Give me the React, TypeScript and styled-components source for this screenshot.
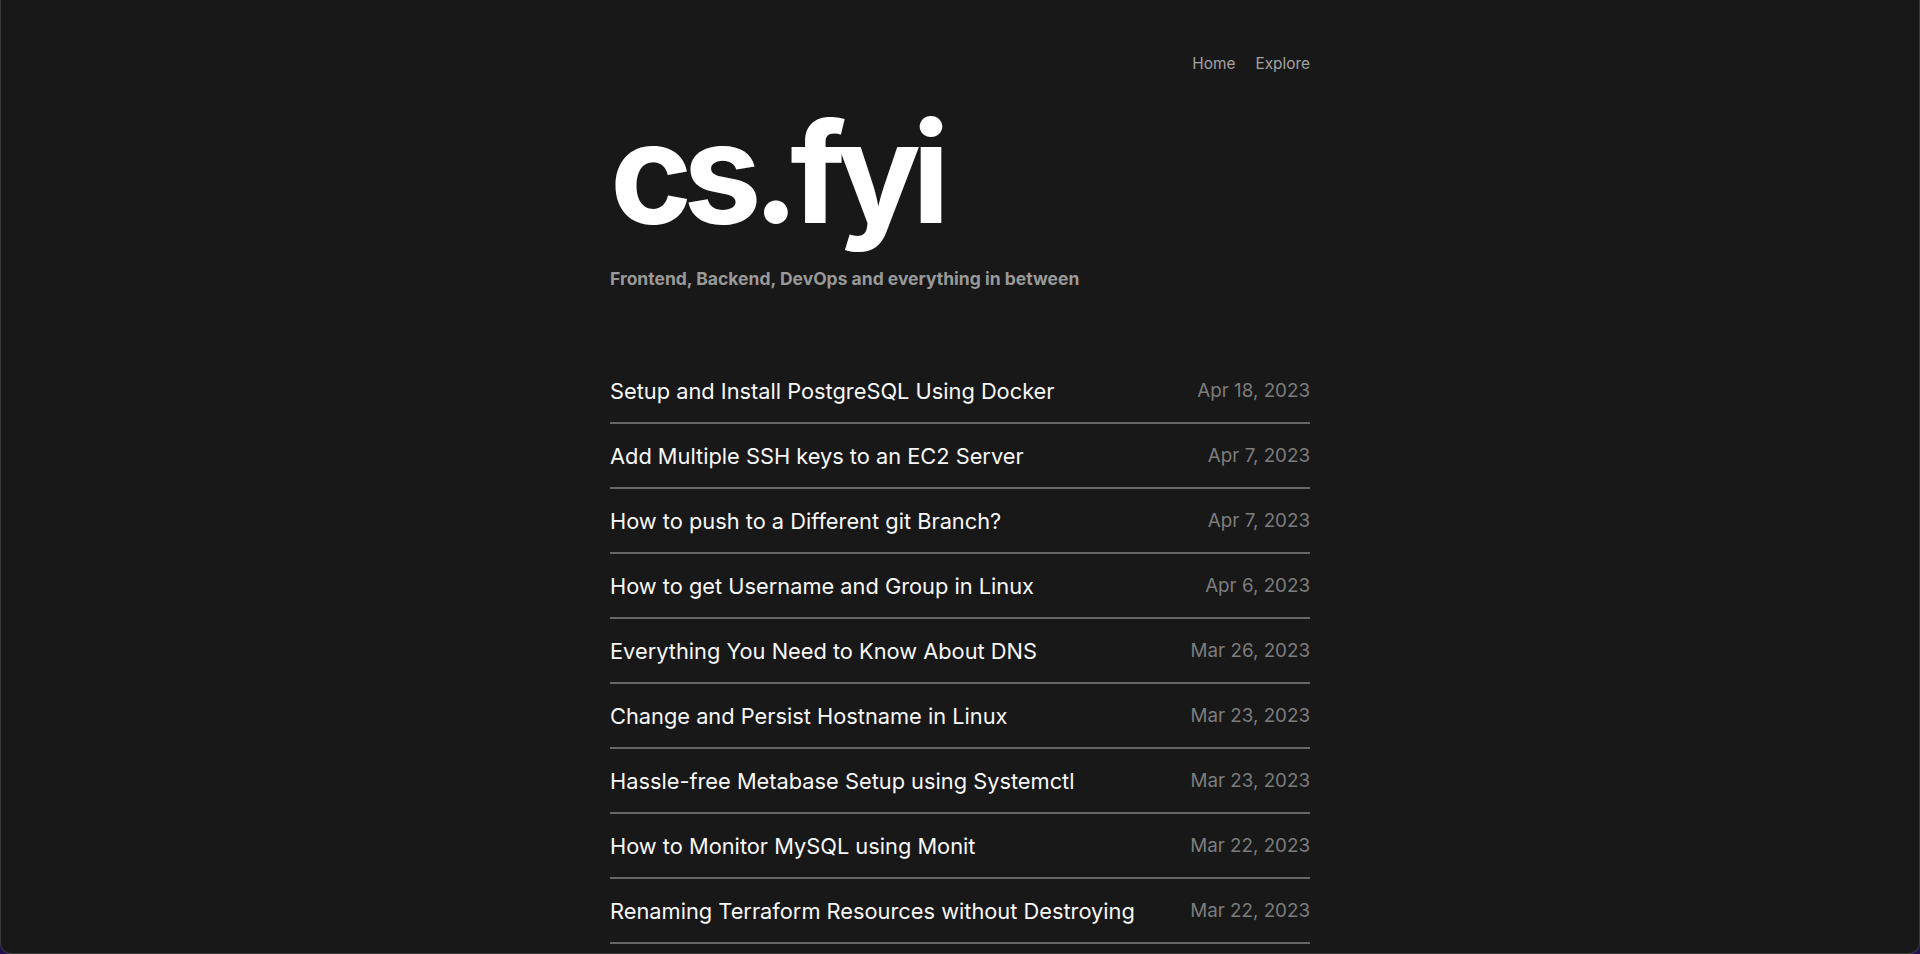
import React from 'react';
import styled, { createGlobalStyle } from 'styled-components';

const posts = [
  { id: 1, title: 'Setup and Install PostgreSQL Using Docker', date: 'Apr 18, 2023' },
  { id: 2, title: 'Add Multiple SSH keys to an EC2 Server', date: 'Apr 7, 2023' },
  { id: 3, title: 'How to push to a Different git Branch?', date: 'Apr 7, 2023' },
  { id: 4, title: 'How to get Username and Group in Linux', date: 'Apr 6, 2023' },
  { id: 5, title: 'Everything You Need to Know About DNS', date: 'Mar 26, 2023' },
  { id: 6, title: 'Change and Persist Hostname in Linux', date: 'Mar 23, 2023' },
  { id: 7, title: 'Hassle-free Metabase Setup using Systemctl', date: 'Mar 23, 2023' },
  { id: 8, title: 'How to Monitor MySQL using Monit', date: 'Mar 22, 2023' },
  { id: 9, title: 'Renaming Terraform Resources without Destroying', date: 'Mar 22, 2023' },
];

const App: React.FC = () => {
  return (
    <>
      <GlobalStyle />
      <Window>
        <Column>
          <Nav>
            <NavLink href="#">Home</NavLink>
            <NavLink href="#">Explore</NavLink>
          </Nav>
          <Hero>
            <Logo>cs.fyi</Logo>
            <Tagline>Frontend, Backend, DevOps and everything in between</Tagline>
          </Hero>
          <PostList>
            {posts.map((post) => (
              <PostRow key={post.id}>
                <PostTitle href="#">{post.title}</PostTitle>
                <PostDate>{post.date}</PostDate>
              </PostRow>
            ))}
          </PostList>
        </Column>
      </Window>
    </>
  );
};

export default App;

const GlobalStyle = createGlobalStyle`
  html, body {
    margin: 0;
    padding: 0;
    height: 100%;
    background: #24104f;
  }
  body {
    font-family: Inter, "Liberation Sans", sans-serif;
    -webkit-font-smoothing: antialiased;
  }
  * {
    box-sizing: border-box;
  }
`;

const Window = styled.div`
  height: 954px;
  background: #181818;
  border: 1px solid #3a3a3a;
  border-top: none;
  border-radius: 0 0 11px 11px;
  overflow: hidden;
`;

const Column = styled.div`
  width: 700px;
  margin: 0 auto;
`;

const Nav = styled.nav`
  display: flex;
  justify-content: flex-end;
  gap: 20px;
  padding-top: 52px;
`;

const NavLink = styled.a`
  color: #a3a3a3;
  font-size: 15.4px;
  line-height: 24px;
  text-decoration: none;
`;

const Hero = styled.header`
  display: flex;
  flex-direction: column;
  padding-top: 26px;
`;

const Logo = styled.h1`
  margin: 0;
  color: #ffffff;
  font-size: 140px;
  font-weight: 700;
  line-height: 1;
  letter-spacing: -0.065em;
`;

const Tagline = styled.p`
  margin: 25px 0 0;
  color: #999999;
  font-size: 17.5px;
  font-weight: 700;
  line-height: 24px;
`;

const PostList = styled.ul`
  list-style: none;
  margin: 68px 0 0;
  padding: 0;
`;

const PostRow = styled.li`
  display: flex;
  justify-content: space-between;
  align-items: center;
  padding: 16px 0 15px;
  border-bottom: 2px solid #666666;
`;

const PostTitle = styled.a`
  color: #f7f7f7;
  font-size: 21.8px;
  line-height: 32px;
  text-decoration: none;
`;

const PostDate = styled.span`
  color: #7d7d7d;
  font-size: 18.8px;
  line-height: 32px;
`;
